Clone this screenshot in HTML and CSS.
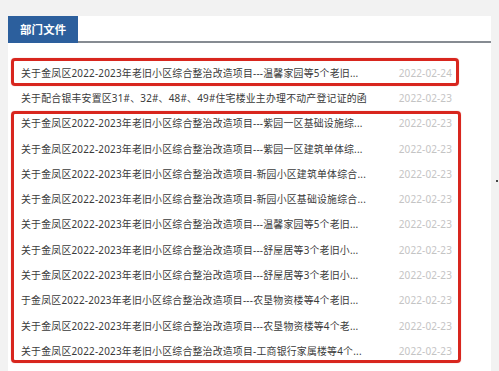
FILE: index.html
```html
<!DOCTYPE html>
<html lang="zh-CN">
<head>
<meta charset="utf-8">
<title>部门文件</title>
<link rel="stylesheet" href="styles.css">
</head>
<body>
<div class="page">
  <section class="panel">
    <header class="panel-head">
      <h2 class="tab">部门文件</h2>
    </header>
    <ul class="list">
      <li class="row"><span class="title">关于金凤区2022-2023年老旧小区综合整治改造项目---温馨家园等5个老旧...</span><span class="date">2022-02-24</span></li>
      <li class="row"><span class="title">关于配合银丰安置区31#、32#、48#、49#住宅楼业主办理不动产登记证的函</span><span class="date">2022-02-23</span></li>
      <li class="row"><span class="title">关于金凤区2022-2023年老旧小区综合整治改造项目---紫园一区基础设施综...</span><span class="date">2022-02-23</span></li>
      <li class="row"><span class="title">关于金凤区2022-2023年老旧小区综合整治改造项目---紫园一区建筑单体综...</span><span class="date">2022-02-23</span></li>
      <li class="row"><span class="title">关于金凤区2022-2023年老旧小区综合整治改造项目-新园小区建筑单体综合...</span><span class="date">2022-02-23</span></li>
      <li class="row"><span class="title">关于金凤区2022-2023年老旧小区综合整治改造项目-新园小区基础设施综合...</span><span class="date">2022-02-23</span></li>
      <li class="row"><span class="title">关于金凤区2022-2023年老旧小区综合整治改造项目---温馨家园等5个老旧...</span><span class="date">2022-02-23</span></li>
      <li class="row"><span class="title">关于金凤区2022-2023年老旧小区综合整治改造项目---舒屋居等3个老旧小...</span><span class="date">2022-02-23</span></li>
      <li class="row"><span class="title">关于金凤区2022-2023年老旧小区综合整治改造项目---舒屋居等3个老旧小...</span><span class="date">2022-02-23</span></li>
      <li class="row"><span class="title">于金凤区2022-2023年老旧小区综合整治改造项目---农垦物资楼等4个老旧...</span><span class="date">2022-02-23</span></li>
      <li class="row"><span class="title">关于金凤区2022-2023年老旧小区综合整治改造项目---农垦物资楼等4个老...</span><span class="date">2022-02-23</span></li>
      <li class="row"><span class="title">关于金凤区2022-2023年老旧小区综合整治改造项目-工商银行家属楼等4个...</span><span class="date">2022-02-23</span></li>
    </ul>
    <div class="mark mark-one"></div>
    <div class="mark mark-two"></div>
  </section>
  <span class="dot"></span>
</div>
</body>
</html>
```

FILE: styles.css
```css
html, body {
  margin: 0;
  padding: 0;
}
body {
  background: #f2f2f2;
  font-family: "Noto Sans", "Noto Sans CJK SC", sans-serif;
  overflow: hidden;
  height: 371px;
}
.page {
  display: flex;
  align-items: flex-start;
  padding: 16px 0 0 8px;
}
.panel {
  position: relative;
  width: 483px;
  height: 355px;
  background: #fff;
  flex: none;
}
.panel-head {
  display: flex;
  border-bottom: 2px solid #868b92;
  height: 25px;
}
.tab {
  margin: 0;
  width: 70px;
  height: 27px;
  box-sizing: border-box;
  background: #2c5f9d;
  color: #fff;
  font-family: "Noto Sans CJK SC", sans-serif;
  font-size: 11.4px;
  font-weight: 700;
  line-height: 27px;
  padding-left: 12px;
  letter-spacing: 0.2px;
}
.list {
  list-style: none;
  margin: 0;
  padding: 17px 39px 0 13px;
}
.row {
  display: flex;
  justify-content: space-between;
  align-items: center;
  height: 25.3px;
  font-size: 9.9px;
  white-space: nowrap;
}
.title {
  color: #3a3a3a;
  letter-spacing: 0.22px;
}
.date {
  color: #c4c4c4;
  font-size: 10px;
  letter-spacing: 0.1px;
}
.mark {
  position: absolute;
  border: 3px solid #d8261e;
  border-radius: 4px;
  box-shadow: 0 0 1px rgba(200, 30, 20, 0.5);
}
.mark-one {
  left: 3px;
  top: 42px;
  width: 442px;
  height: 22px;
}
.mark-two {
  left: 3px;
  top: 95px;
  width: 444px;
  height: 246px;
}
.dot {
  width: 2px;
  height: 2px;
  border-radius: 50%;
  background: #111;
  margin: 164px 0 0 5px;
}
```
